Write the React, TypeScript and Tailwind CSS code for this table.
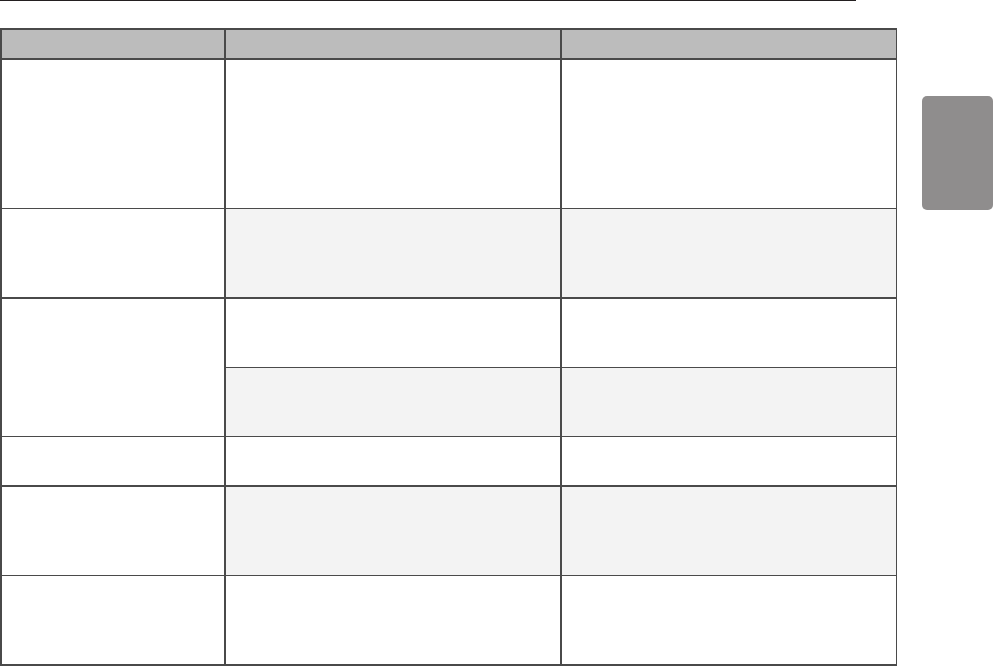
const line = 'border-[#4a4a4a]'

type RowProps = {
  h: string
  shade?: boolean
  bottom?: string
}

function Row({ h, shade, bottom = '' }: RowProps) {
  const fill = shade ? 'bg-[#f3f3f3]' : 'bg-white'
  return (
    <div className={`flex ${h} ${bottom} ${line}`}>
      <div className={`w-[224px] shrink-0 border-r-2 ${line} bg-white`} />
      <div className={`w-[336px] shrink-0 border-r-2 ${line} ${fill}`} />
      <div className={`flex-1 ${fill}`} />
    </div>
  )
}

export default function App() {
  return (
    <div className="w-[993px] h-[666px] bg-white overflow-hidden font-['Liberation_Sans',sans-serif]">
      <div className="h-px w-[856px] bg-[#231f20]" />
      <div className="flex items-start">
        <div className={`mt-[27px] w-[897px] shrink-0 border-t-2 border-l-2 border-r border-b-2 ${line}`}>
          {/* header */}
          <div className={`flex h-[30px] border-b-2 ${line} bg-[#bcbcbc]`}>
            <div className={`w-[224px] shrink-0 border-r-2 ${line}`} />
            <div className={`w-[336px] shrink-0 border-r-2 ${line}`} />
            <div className="flex-1" />
          </div>
          <Row h="h-[149px]" bottom="border-b" />
          <Row h="h-[90px]" shade bottom="border-b-2" />
          {/* row with merged first cell */}
          <div className={`flex h-[138px] border-b ${line}`}>
            <div className={`w-[224px] shrink-0 border-r-2 ${line} bg-white`} />
            <div className="flex flex-1 flex-col">
              <div className={`flex h-[69px] border-b ${line}`}>
                <div className={`w-[336px] shrink-0 border-r-2 ${line}`} />
                <div className="flex-1" />
              </div>
              <div className="flex flex-1 bg-[#f3f3f3]">
                <div className={`w-[336px] shrink-0 border-r-2 ${line}`} />
                <div className="flex-1" />
              </div>
            </div>
          </div>
          <Row h="h-[50px]" bottom="border-b-2" />
          <Row h="h-[89px]" shade bottom="border-b" />
          <Row h="h-[88px]" />
        </div>
        <div className="ml-[25px] mt-[95px] h-[114px] w-[71px] rounded-[5px] bg-[#8f8d8d]" />
      </div>
    </div>
  )
}
